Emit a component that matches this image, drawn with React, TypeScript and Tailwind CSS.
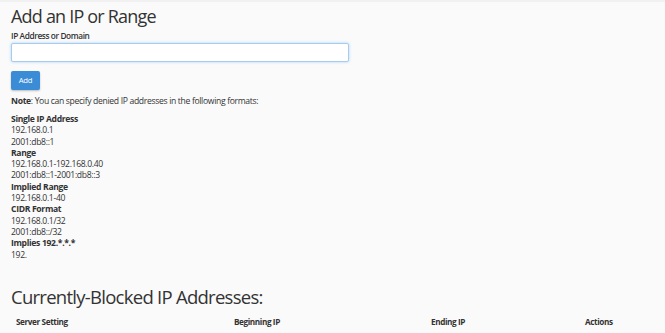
import React from "react";

const formats: { label: string; bold?: boolean }[] = [
  { label: "Single IP Address", bold: true },
  { label: "192.168.0.1" },
  { label: "2001:db8::1" },
  { label: "Range", bold: true },
  { label: "192.168.0.1-192.168.0.40" },
  { label: "2001:db8::1-2001:db8::3" },
  { label: "Implied Range", bold: true },
  { label: "192.168.0.1-40" },
  { label: "CIDR Format", bold: true },
  { label: "192.168.0.1/32" },
  { label: "2001:db8::/32" },
  { label: "Implies 192.*.*.*", bold: true },
  { label: "192." },
];

const App: React.FC = () => {
  return (
    <div className="min-h-[333px] w-full bg-[#fafafa] border-t-2 border-[#f1f1f1] font-['Open_Sans',sans-serif] text-[#333]">
      <div className="pl-[11px] pr-[16px]">
        {/* Add form */}
        <h2 className="pt-[4px] text-[18px] leading-[20px] tracking-[-0.8px]">Add an IP or Range</h2>
        <label className="block mt-[4px] text-[8.3px] font-semibold leading-[11px] tracking-[-0.4px]">
          IP Address or Domain
        </label>
        <input
          type="text"
          className="block mt-[2px] w-[338px] h-[19px] bg-white border border-[#a6cdef] rounded-[2px] shadow-[0_0_3px_rgba(102,175,233,0.55)] outline-none"
        />
        <button className="block mt-[9px] w-[29px] h-[19px] bg-[#3a8cd6] text-white text-[7.7px] tracking-[-0.3px] rounded-[2px] shadow-[0_1px_2px_rgba(0,0,0,0.25)]">
          Add
        </button>

        <p className="mt-[6px] text-[8.6px] leading-[11px] tracking-[-0.33px]">
          <span className="font-bold">Note</span>: You can specify denied IP addresses in the following formats:
        </p>
        <div className="mt-[7px] text-[8.6px] leading-[11.3px] tracking-[-0.33px]">
          {formats.map((f, i) => (
            <div key={i} className={f.bold ? "font-bold" : ""}>
              {f.label}
            </div>
          ))}
        </div>

        {/* Blocked list */}
        <h2 className="mt-[26px] text-[18.5px] leading-[20px] tracking-[-0.73px]">Currently-Blocked IP Addresses:</h2>
        <div className="mt-[10px] grid grid-cols-[218px_197px_154px_1fr] pl-[5px] text-[8.2px] font-bold leading-[10px] tracking-[-0.4px]">
          <div>Server Setting</div>
          <div>Beginning IP</div>
          <div>Ending IP</div>
          <div>Actions</div>
        </div>
      </div>
    </div>
  );
};

export default App;
